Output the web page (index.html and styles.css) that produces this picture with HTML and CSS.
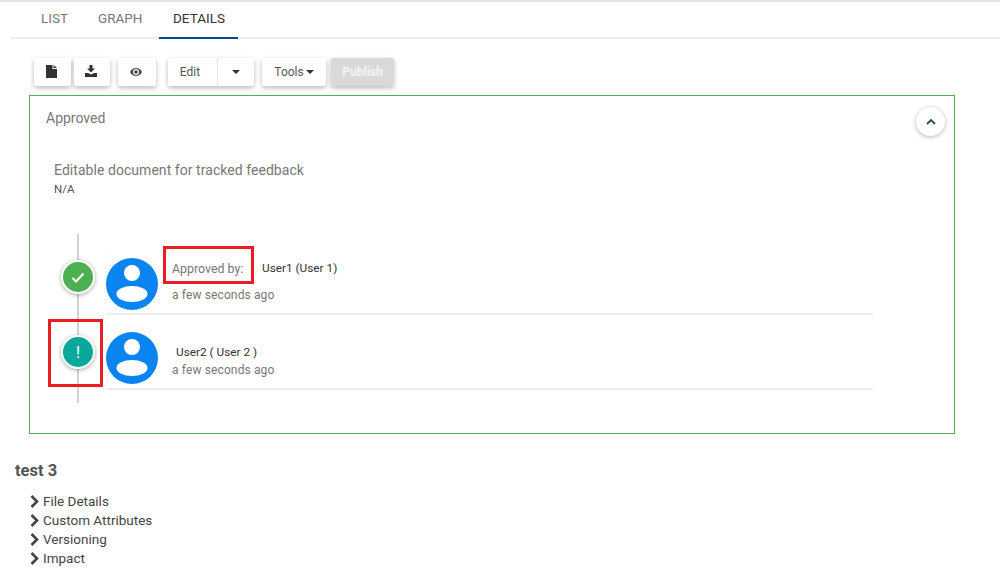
FILE: index.html
```html
<!DOCTYPE html>
<html lang="en">
<head>
<meta charset="utf-8">
<title>Details</title>
<link rel="stylesheet" href="styles.css">
</head>
<body>
<nav class="tabs">
  <a class="tab">LIST</a>
  <a class="tab">GRAPH</a>
  <a class="tab active">DETAILS</a>
</nav>
<div class="toolbar">
  <button class="btn icon b1"><svg width="11" height="13" viewBox="0 0 11 13"><path fill="#333" d="M0 0h6.500v4H11v9H0z"/><path fill="#333" d="M7.500 0L11 3H7.500z"/></svg></button>
  <button class="btn icon b2"><svg width="12" height="12" viewBox="0 0 12 12"><path fill="#333" d="M4.500 0h3v3.500H10L6 7.500 2 3.500h2.500z"/><path fill="#333" d="M0 8h3l3 1.500L9 8h3v4H0z"/></svg></button>
  <button class="btn icon b3"><svg width="12" height="8" viewBox="0 0 12 8"><path fill="#444" fill-rule="evenodd" d="M6 0c2.600 0 4.700 1.600 6 4-1.300 2.400-3.400 4-6 4S1.300 6.400 0 4c1.300-2.400 3.400-4 6-4zm0 1a3 3 0 1 0 0 6 3 3 0 0 0 0-6zm0 1.200a1.800 1.800 0 1 1 0 3.600 1.800 1.800 0 0 1 0-3.600z"/></svg></button>
  <div class="btn group">
    <span class="part edit">Edit</span>
    <span class="part caretbox"><i class="caret"></i></span>
  </div>
  <button class="btn tools">Tools<i class="caret small"></i></button>
  <button class="btn publish">Publish</button>
</div>
<section class="panel">
  <header class="panel-head">
    <span class="status">Approved</span>
    <button class="collapse"><svg width="10" height="7" viewBox="0 0 10 7"><path fill="none" stroke="#33475b" stroke-width="1.800" d="M1 6l4-4 4 4"/></svg></button>
  </header>
  <div class="doc">
    <div class="doc-title">Editable document for tracked feedback</div>
    <div class="doc-sub">N/A</div>
  </div>
  <div class="timeline">
    <div class="row first">
      <span class="marker green"><svg width="14" height="11" viewBox="0 0 14 11"><path fill="none" stroke="#fff" stroke-width="2" d="M1.500 6l3.500 3.500L12.500 1.500"/></svg></span>
      <div class="card">
        <svg class="avatar" viewBox="0 0 52 52"><circle cx="26" cy="26" r="26" fill="#0a84f0"/><circle cx="26" cy="15" r="8" fill="#fff"/><ellipse cx="26" cy="36" rx="15.500" ry="8" fill="#fff"/></svg>
        <div class="info">
          <div class="line1"><span class="label">Approved by:</span><span class="user">User1 (User 1)</span></div>
          <div class="time">a few seconds ago</div>
        </div>
        <span class="callout callout-label"></span>
      </div>
    </div>
    <div class="row second">
      <span class="marker teal">!</span>
      <span class="callout callout-marker"></span>
      <div class="card">
        <svg class="avatar" viewBox="0 0 52 52"><circle cx="26" cy="26" r="26" fill="#0a84f0"/><circle cx="26" cy="15" r="8" fill="#fff"/><ellipse cx="26" cy="36" rx="15.500" ry="8" fill="#fff"/></svg>
        <div class="info">
          <div class="line1 plain"><span class="user">User2 ( User 2 )</span></div>
          <div class="time">a few seconds ago</div>
        </div>
      </div>
    </div>
  </div>
</section>
<h2 class="title">test 3</h2>
<ul class="sections">
  <li><svg width="9" height="13" viewBox="0 0 9 13"><path fill="none" stroke="#444" stroke-width="2.600" d="M1.500 1l5.500 5.500L1.500 12"/></svg>File Details</li>
  <li><svg width="9" height="13" viewBox="0 0 9 13"><path fill="none" stroke="#444" stroke-width="2.600" d="M1.500 1l5.500 5.500L1.500 12"/></svg>Custom Attributes</li>
  <li><svg width="9" height="13" viewBox="0 0 9 13"><path fill="none" stroke="#444" stroke-width="2.600" d="M1.500 1l5.500 5.500L1.500 12"/></svg>Versioning</li>
  <li><svg width="9" height="13" viewBox="0 0 9 13"><path fill="none" stroke="#444" stroke-width="2.600" d="M1.500 1l5.500 5.500L1.500 12"/></svg>Impact</li>
</ul>
</body>
</html>
```
FILE: styles.css
```css
* { box-sizing: border-box; }
html, body { margin: 0; padding: 0; }
body {
  width: 1000px;
  height: 582px;
  overflow: hidden;
  background: #fff;
  font-family: Roboto, "Liberation Sans", sans-serif;
  font-size: 14px;
  color: #444;
  border-top: 2px solid #e6e6e6;
}
.tabs {
  display: flex;
  height: 37px;
  margin-left: 10px;
  padding-left: 14px;
  border-bottom: 2px solid #eee;
}
.tab {
  padding: 0 0 0 17px;
  height: 37px;
  line-height: 33px;
  font-size: 13.500px;
  color: #777;
}
.tab:nth-child(1) { width: 57px; }
.tab:nth-child(2) { width: 78px; }
.tab.active {
  width: 79px;
  padding: 0 0 0 14px;
  color: #333;
  border-bottom: 2px solid #004a94;
}
.toolbar {
  display: flex;
  height: 28px;
  margin: 19px 0 10px 34px;
}
.btn {
  height: 28px;
  padding: 0;
  border: 0;
  border-radius: 2px;
  background: #fff;
  font: 12px Roboto, "Liberation Sans", sans-serif;
  color: #555;
  box-shadow: 0 2px 5px rgba(0, 0, 0, .28);
}
.icon { display: flex; align-items: center; justify-content: center; }
.b1 { width: 37px; margin-right: 3px; padding: 0 3px 2px 0; }
.b2 { width: 36px; margin-right: 8px; padding: 0 2px 2px 0; }
.b3 { width: 38px; margin-right: 12px; padding: 0 2px 0 0; }
.group { display: flex; width: 86px; margin-right: 8px; }
.part { display: flex; align-items: center; justify-content: center; }
.edit { width: 50px; padding-right: 5px; border-right: 1px solid #e4e4e4; }
.caretbox { width: 36px; }
.caret {
  display: block;
  border-top: 4px solid #333;
  border-left: 4px solid transparent;
  border-right: 4px solid transparent;
}
.caret.small { margin-left: 2px; border-width: 4px 4px 0; }
.tools {
  display: flex;
  align-items: center;
  justify-content: center;
  width: 64px;
  margin-right: 5px;
}
.publish {
  width: 63px;
  background: #d9d9d9;
  color: #f4f4f4;
  font-weight: 700;
}
.panel {
  width: 926px;
  height: 339px;
  margin-left: 29px;
  margin-top: -1px;
  border: 1px solid #4caf50;
}
.panel-head {
  display: flex;
  align-items: flex-start;
  justify-content: space-between;
  height: 60px;
  padding: 13px 9px 0 16px;
}
.status { font-size: 14px; color: #777; line-height: 18px; }
.collapse {
  display: flex;
  align-items: center;
  justify-content: center;
  width: 29px;
  height: 29px;
  margin-top: -2px;
  padding: 0;
  border: 0;
  border-radius: 50%;
  background: #fff;
  box-shadow: 0 1px 4px rgba(0, 0, 0, .3);
}
.doc { padding-left: 24px; height: 74px; }
.doc-title { font-size: 14px; line-height: 20px; color: #777; margin-top: 4px; letter-spacing: .05px; }
.doc-sub { font-size: 11.500px; line-height: 16px; color: #555; margin-top: 1px; }
.timeline {
  position: relative;
  padding: 20px 0 13px 76px;
}
.timeline::before {
  content: "";
  position: absolute;
  left: 47px;
  top: 0;
  bottom: 0;
  width: 2px;
  background: #d2d2d2;
}
.row { position: relative; width: 767px; height: 61px; }
.row.second { margin-top: 14px; }
.card {
  position: relative;
  display: flex;
  height: 61px;
  border-bottom: 2px solid #eee;
  box-shadow: -1px 0 1px rgba(0, 0, 0, .02);
}
.avatar { width: 52px; height: 52px; margin: 4px 0 0 -.5px; flex: none; }
.second .avatar { margin-top: 3px; }
.info { padding: 6px 0 0 14.500px; }
.line1 { display: flex; height: 16px; margin-top: 0; align-items: center; margin-bottom: 12px; }
.line1.plain { margin-top: 9px; margin-bottom: 3px; padding-left: 4px; }
.label { font-size: 12.400px; color: #777; width: 90px; }
.user { font-size: 11.800px; color: #333; }
.time { font-size: 12px; color: #777; line-height: 14px; letter-spacing: .13px; }
.marker {
  position: absolute;
  left: -45px;
  top: 6px;
  z-index: 1;
  display: flex;
  align-items: center;
  justify-content: center;
  width: 34px;
  height: 34px;
  border: 2px solid #fff;
  border-radius: 50%;
  box-shadow: 0 1px 4px rgba(0, 0, 0, .35);
  color: #fff;
  font-size: 16px;
}
.green { background: #4caf50; }
.teal { background: #0aa89a; }
.callout {
  position: absolute;
  z-index: 2;
  border: 3px solid #ed1c24;
}
.callout-label { left: 57px; top: -8px; width: 91px; height: 38px; }
.callout-marker { left: -58px; top: -10px; width: 55px; height: 68px; }
.title {
  margin: 27px 0 0 15px;
  font-size: 16.500px;
  line-height: 20px;
  font-weight: 700;
  color: #555;
}
.sections {
  list-style: none;
  margin: 10.500px 0 0 30px;
  padding: 0;
}
.sections li {
  display: flex;
  align-items: center;
  gap: 4px;
  height: 19px;
  font-size: 13.500px;
  color: #444;
}
```
